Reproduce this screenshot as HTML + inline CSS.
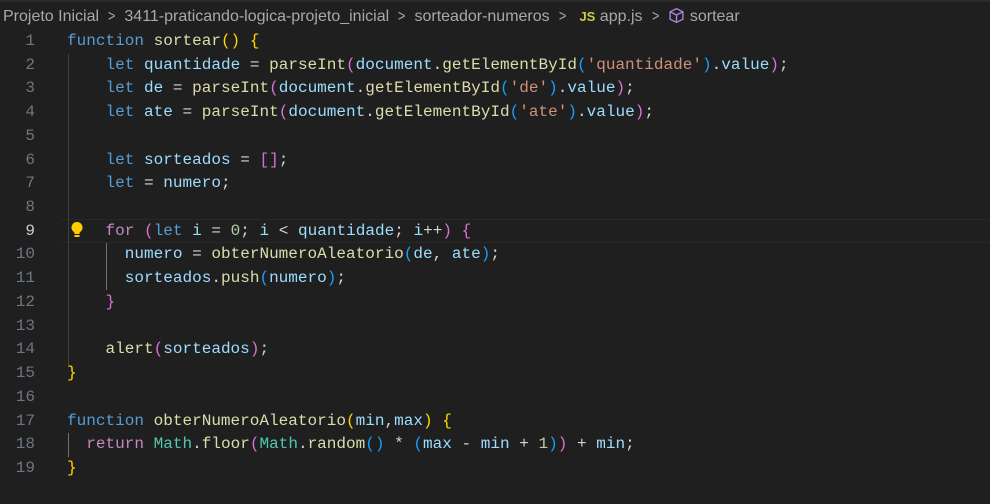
<!DOCTYPE html>
<html><head><meta charset="utf-8"><style>
html,body{margin:0;padding:0;background:#1f1f1f;width:990px;height:483px;overflow:hidden}
.top{position:absolute;left:0;top:0;width:990px;height:2px;background:#2b2b2b}
.bc{position:absolute;left:3px;top:6px;height:22px;line-height:22px;font-family:"Liberation Sans",sans-serif;font-size:16px;color:#a9a9a9;white-space:nowrap}
.bc .sep{color:#a9a9a9;margin:0 8px;display:inline-block;transform:scaleX(0.8)}
.code{position:absolute;left:0;top:30px;font-family:"Liberation Mono",monospace;font-size:16.05px;line-height:23.72px;white-space:pre}
.ln{position:absolute;left:0;width:35px;text-align:right;color:#6e7681}
.ln.cur{color:#cccccc}
.tx{position:absolute;left:67px;color:#d4d4d4}
.k{color:#569cd6}.c{color:#c586c0}.f{color:#dcdcaa}.v{color:#9cdcfe}.s{color:#ce9178}.n{color:#b5cea8}.t{color:#4ec9b0}
.b1{color:#ffd700}.b2{color:#da70d6}.b3{color:#179fff}
.hl{position:absolute;left:61px;top:219px;width:929px;height:22px;border-top:1px solid #282828;border-bottom:1px solid #282828}
.g{position:absolute;width:1px;background:#404040}
</style></head><body>
<div class="top"></div>
<div class="bc">Projeto Inicial<span class="sep">&gt;</span>3411-praticando-logica-projeto_inicial<span class="sep">&gt;</span>sorteador-numeros<span class="sep">&gt;</span> <b style="color:#cbcb41;font-size:13px">JS</b> app.js<span class="sep">&gt;</span><svg width="17" height="17" viewBox="0 0 16 16" style="vertical-align:-3px;margin-right:5px"><path d="M8 1.5 L14 4.5 V11.5 L8 14.5 L2 11.5 V4.5 Z M2 4.5 L8 7.5 L14 4.5 M8 7.5 V14.5" fill="none" stroke="#b180d7" stroke-width="1.3"/></svg>sortear</div>
<div class="hl"></div>
<div class="g" style="left:68px;top:54px;height:311px"></div>
<div class="g" style="left:106px;top:243px;height:47px;background:#707070"></div>
<div class="g" style="left:68px;top:433px;height:24px;background:#707070"></div>
<svg style="position:absolute;left:69px;top:221px" width="16" height="18" viewBox="0 0 16 18"><path d="M8 1a5.5 5.5 0 0 0-3.3 9.9c.6.5.8 1 .8 1.6V13h5v-.5c0-.6.2-1.1.8-1.6A5.5 5.5 0 0 0 8 1z" fill="#ffcc00"/><rect x="5.5" y="14" width="5" height="2" fill="#ffcc00"/></svg>
<div class="code">
<div class="ln" style="top:0">1</div><div class="tx" style="top:0"><span class="k">function</span> <span class="f">sortear</span><span class="b1">()</span> <span class="b1">{</span></div>
<div class="ln" style="top:23.72px">2</div><div class="tx" style="top:23.72px">    <span class="k">let</span> <span class="v">quantidade</span> = <span class="f">parseInt</span><span class="b2">(</span><span class="v">document</span>.<span class="f">getElementById</span><span class="b3">(</span><span class="s">'quantidade'</span><span class="b3">)</span>.<span class="v">value</span><span class="b2">)</span>;</div>
<div class="ln" style="top:47.44px">3</div><div class="tx" style="top:47.44px">    <span class="k">let</span> <span class="v">de</span> = <span class="f">parseInt</span><span class="b2">(</span><span class="v">document</span>.<span class="f">getElementById</span><span class="b3">(</span><span class="s">'de'</span><span class="b3">)</span>.<span class="v">value</span><span class="b2">)</span>;</div>
<div class="ln" style="top:71.16px">4</div><div class="tx" style="top:71.16px">    <span class="k">let</span> <span class="v">ate</span> = <span class="f">parseInt</span><span class="b2">(</span><span class="v">document</span>.<span class="f">getElementById</span><span class="b3">(</span><span class="s">'ate'</span><span class="b3">)</span>.<span class="v">value</span><span class="b2">)</span>;</div>
<div class="ln" style="top:94.88px">5</div>
<div class="ln" style="top:118.6px">6</div><div class="tx" style="top:118.6px">    <span class="k">let</span> <span class="v">sorteados</span> = <span class="b2">[]</span>;</div>
<div class="ln" style="top:142.32px">7</div><div class="tx" style="top:142.32px">    <span class="k">let</span> = <span class="v">numero</span>;</div>
<div class="ln" style="top:166.04px">8</div>
<div class="ln cur" style="top:189.76px">9</div><div class="tx" style="top:189.76px">    <span class="c">for</span> <span class="b2">(</span><span class="k">let</span> <span class="v">i</span> = <span class="n">0</span>; <span class="v">i</span> &lt; <span class="v">quantidade</span>; <span class="v">i</span>++<span class="b2">)</span> <span class="b2">{</span></div>
<div class="ln" style="top:213.48px">10</div><div class="tx" style="top:213.48px">      <span class="v">numero</span> = <span class="f">obterNumeroAleatorio</span><span class="b3">(</span><span class="v">de</span>, <span class="v">ate</span><span class="b3">)</span>;</div>
<div class="ln" style="top:237.2px">11</div><div class="tx" style="top:237.2px">      <span class="v">sorteados</span>.<span class="f">push</span><span class="b3">(</span><span class="v">numero</span><span class="b3">)</span>;</div>
<div class="ln" style="top:260.92px">12</div><div class="tx" style="top:260.92px">    <span class="b2">}</span></div>
<div class="ln" style="top:284.64px">13</div>
<div class="ln" style="top:308.36px">14</div><div class="tx" style="top:308.36px">    <span class="f">alert</span><span class="b2">(</span><span class="v">sorteados</span><span class="b2">)</span>;</div>
<div class="ln" style="top:332.08px">15</div><div class="tx" style="top:332.08px"><span class="b1">}</span></div>
<div class="ln" style="top:355.8px">16</div>
<div class="ln" style="top:379.52px">17</div><div class="tx" style="top:379.52px"><span class="k">function</span> <span class="f">obterNumeroAleatorio</span><span class="b1">(</span><span class="v">min</span>,<span class="v">max</span><span class="b1">)</span> <span class="b1">{</span></div>
<div class="ln" style="top:403.24px">18</div><div class="tx" style="top:403.24px">  <span class="c">return</span> <span class="t">Math</span>.<span class="f">floor</span><span class="b2">(</span><span class="t">Math</span>.<span class="f">random</span><span class="b3">()</span> * <span class="b3">(</span><span class="v">max</span> - <span class="v">min</span> + <span class="n">1</span><span class="b3">)</span><span class="b2">)</span> + <span class="v">min</span>;</div>
<div class="ln" style="top:426.96px">19</div><div class="tx" style="top:426.96px"><span class="b1">}</span></div>
</div>
</body></html>
